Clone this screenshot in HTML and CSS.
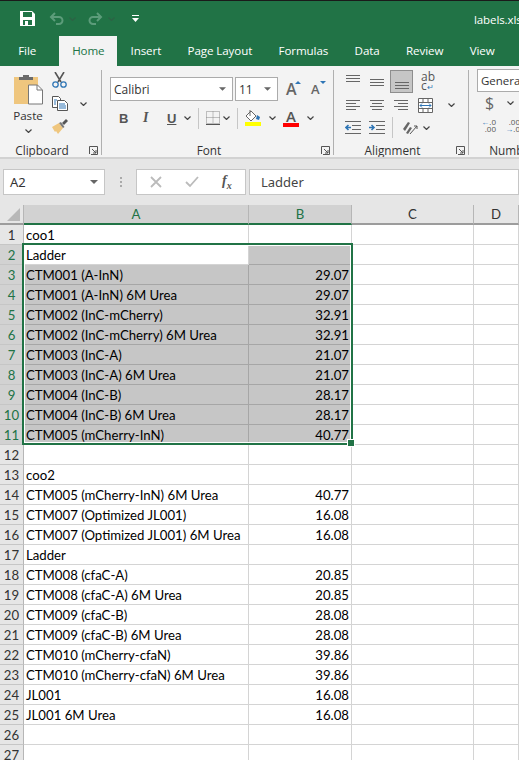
FILE: index.html
```html
<!DOCTYPE html>
<html lang="en">
<head>
    <meta charset="UTF-8">
    <meta name="viewport" content="width=device-width, initial-scale=1.0">
    <title>labels.xlsx - Excel</title>
    <link rel="stylesheet" href="styles.css">
</head>
<body>
    <svg class="defs" width="0" height="0">
        <symbol id="chev" viewBox="0 0 7 4"><path d="M.5.5 3.5 3.5 6.5.5" fill="none" stroke="#444" stroke-width="1.2"/></symbol>
        <symbol id="launch" viewBox="0 0 9 9"><path d="M.5 8V.5H8.500V8.500H2M3 3l4 4M7 4v3H4" fill="none" stroke="#555"/></symbol>
        <symbol id="caret" viewBox="0 0 8 4"><path d="M0 0h8L4 4z" fill="#666"/></symbol>
    </svg>

    <header class="titlebar">
        <svg width="15" height="15" viewBox="0 0 15 15"><path d="M0 0h12l3 3v12H0z" fill="#fff"/><path d="M3 1h9v5H3zM3 9h9v5H3z" fill="#217346"/><path d="M5 10h3v4H5z" fill="#fff"/></svg>
        <svg class="qa-undo" width="15" height="13" viewBox="0 0 15 13"><path d="M6 1 2 5l4 4M2 5h8a3.500 3.500 0 0 1 0 7H7" fill="none" stroke="#5c9c7a" stroke-width="2"/></svg>
        <svg class="qa-chev" width="7" height="4"><use href="#chev"/></svg>
        <svg class="qa-redo" width="15" height="13" viewBox="0 0 15 13"><path d="M9 1l4 4-4 4M13 5H5a3.500 3.500 0 0 0 0 7h3" fill="none" stroke="#5c9c7a" stroke-width="2"/></svg>
        <svg class="qa-chev" width="7" height="4"><use href="#chev"/></svg>
        <svg class="qa-more" width="7" height="7" viewBox="0 0 7 7"><path d="M0 0h7v1H0zM0 3h7L3.500 7z" fill="#fff"/></svg>
        <span class="doc-name">labels.xlsx - Excel</span>
    </header>

    <nav class="tabs">
        <span class="tab tab-file">File</span>
        <span class="tab tab-active">Home</span>
        <span class="tab">Insert</span>
        <span class="tab">Page Layout</span>
        <span class="tab">Formulas</span>
        <span class="tab">Data</span>
        <span class="tab">Review</span>
        <span class="tab">View</span>
    </nav>

    <section class="ribbon">
        <div class="group group-clipboard">
            <div class="group-body">
                <div class="paste">
                    <svg width="29" height="31" viewBox="0 0 29 31"><path d="M0 3h24v27H0z" fill="#efc67e"/><path d="M5 3h14v3H5zM9 1h6v3H9z" fill="#6a6a6a"/><path d="M14.500 11h9l5 5v14h-14z" fill="#fff" stroke="#777"/><path d="M23 11v5h5" fill="none" stroke="#777"/></svg>
                    <span class="paste-label">Paste</span>
                    <svg width="7" height="4"><use href="#chev"/></svg>
                </div>
                <div class="clip-tools">
                    <svg width="15" height="16" viewBox="0 0 15 16"><path d="M3 0l6 10M12 0 6 10" stroke="#555" stroke-width="1.600" fill="none"/><circle cx="3.500" cy="12.500" r="2.700" fill="none" stroke="#2e75b5" stroke-width="1.300"/><circle cx="11.500" cy="12.500" r="2.700" fill="none" stroke="#2e75b5" stroke-width="1.300"/></svg>
                    <div class="copy-row">
                        <svg width="16" height="15" viewBox="0 0 16 15"><path d="M.5.5h6l2 2v9h-8z" fill="#fff" stroke="#555"/><path d="M5.500 4.500h7l3 3v7h-10z" fill="#fff" stroke="#555"/><path d="M2 4h3M2 6h2M2 8h2M7 8h6M7 10h7M7 12h7" stroke="#2e75b5"/></svg>
                        <svg class="copy-chev" width="7" height="4"><use href="#chev"/></svg>
                    </div>
                    <svg width="16" height="15" viewBox="0 0 16 15"><path d="M0 8l7-4 4 5-5 6-2-3-1 1z" fill="#efc67e"/><path d="M7 4l4 5 1.500-1L9 3z" fill="#777"/><path d="M10 4l4-4 2 2-4 4z" fill="#555"/></svg>
                </div>
            </div>
            <div class="group-foot"><span class="group-name">Clipboard</span><svg class="launcher" width="9" height="9"><use href="#launch"/></svg></div>
        </div>

        <div class="group group-font">
            <div class="group-body font-body">
                <div class="font-row">
                    <div class="combo combo-font"><span>Calibri</span><svg width="7" height="4"><use href="#caret"/></svg></div>
                    <div class="combo combo-size"><span>11</span><svg width="7" height="4"><use href="#caret"/></svg></div>
                    <span class="grow">A<i class="tick tick-up"></i></span>
                    <span class="shrink">A<i class="tick tick-down"></i></span>
                </div>
                <div class="font-row format-row">
                    <b class="fmt fmt-b">B</b>
                    <i class="fmt fmt-i">I</i>
                    <u class="fmt fmt-u">U</u>
                    <svg class="fmt-chev" width="7" height="4"><use href="#chev"/></svg>
                    <span class="vsep"></span>
                    <svg width="14" height="14" viewBox="0 0 14 14"><path d="M.5.5h13v12H.5zM7 .5v12M.5 6.500h13" fill="none" stroke="#888" stroke-dasharray="1 1"/><path d="M0 13h14v1H0z" fill="#555"/></svg>
                    <svg class="fmt-chev" width="7" height="4"><use href="#chev"/></svg>
                    <span class="vsep"></span>
                    <span class="fill-icon">
                        <svg width="16" height="12" viewBox="0 0 16 12"><path d="M6 1 1 6l5 5 5-5z" fill="#fff" stroke="#666"/><path d="M5 0v6" stroke="#666"/><path d="M12 5l3 2-1 3-3-1z" fill="#2e75b5"/></svg>
                        <span class="bar bar-yellow"></span>
                    </span>
                    <svg class="fmt-chev" width="7" height="4"><use href="#chev"/></svg>
                    <span class="color-icon">A<span class="bar bar-red"></span></span>
                    <svg class="fmt-chev" width="7" height="4"><use href="#chev"/></svg>
                </div>
            </div>
            <div class="group-foot"><span class="group-name">Font</span><svg class="launcher" width="9" height="9"><use href="#launch"/></svg></div>
        </div>

        <div class="group group-align">
            <div class="group-body align-body">
                <div class="align-row row-one">
                    <span class="lines lines-top"><i></i><i></i><i></i></span>
                    <span class="lines lines-mid"><i></i><i></i><i></i></span>
                    <span class="lines-on"><span class="lines"><i></i><i></i><i></i></span></span>
                    <span class="wrap-icon">ab<br>c<em>↵</em></span>
                </div>
                <div class="align-row">
                    <span class="lines lines-left"><i></i><i></i><i></i><i></i></span>
                    <span class="lines lines-center"><i></i><i></i><i></i><i></i></span>
                    <span class="lines lines-right"><i></i><i></i><i></i><i></i></span>
                    <svg width="15" height="15" viewBox="0 0 15 15"><path d="M.5.5h14v14H.5zM.5 4.500h14M.5 10.500h14M5 .5v4M10 .5v4M5 10.500v4M10 10.500v4" fill="#fff" stroke="#666"/><path d="M2 7.500h11M4 5.500l-2 2 2 2M11 5.500l2 2-2 2" fill="none" stroke="#2e75b5"/></svg>
                    <svg class="merge-chev" width="7" height="4"><use href="#chev"/></svg>
                </div>
                <div class="align-row row-three">
                    <svg width="16" height="14" viewBox="0 0 16 14"><path d="M0 .5h16M7 4.500h9M7 8.500h9M0 12.500h16" stroke="#666"/><path d="M6 6.500H1M3.500 4 1 6.500 3.500 9" fill="none" stroke="#2e75b5" stroke-width="1.600"/></svg>
                    <svg width="16" height="14" viewBox="0 0 16 14"><path d="M0 .5h16M7 4.500h9M7 8.500h9M0 12.500h16" stroke="#666"/><path d="M0 6.500h5M2.500 4 5 6.500 2.500 9" fill="none" stroke="#2e75b5" stroke-width="1.600"/></svg>
                    <span class="vsep"></span>
                    <svg width="17" height="16" viewBox="0 0 17 16"><path d="M2 9l5-7 2 1-5 8zM5 13l4-6 2 1-4 6z" fill="#666"/><path d="M9 14l7-8M13 6h3v3" fill="none" stroke="#555"/></svg>
                    <svg class="orient-chev" width="7" height="4"><use href="#chev"/></svg>
                </div>
            </div>
            <div class="group-foot"><span class="group-name">Alignment</span><svg class="launcher" width="9" height="9"><use href="#launch"/></svg></div>
        </div>

        <div class="group group-number">
            <div class="group-body number-body">
                <div class="combo combo-general"><span>General</span></div>
                <div class="currency-row"><span class="dollar">$</span><svg width="7" height="4"><use href="#chev"/></svg></div>
                <div class="decimal-row">
                    <span class="decimal"><span><em>←</em>.0</span><span>.00</span></span>
                    <span class="decimal"><span>.00</span><span><em>→</em>.0</span></span>
                </div>
            </div>
            <div class="group-foot"><span class="group-name">Number</span></div>
        </div>
    </section>

    <section class="formula-bar">
        <div class="name-box"><span>A2</span><svg width="8" height="4"><use href="#caret"/></svg></div>
        <span class="grip"><i></i><i></i><i></i></span>
        <div class="fx-box">
            <svg width="12" height="12" viewBox="0 0 12 12"><path d="M1 1l10 10M11 1 1 11" stroke="#bbb" stroke-width="1.800"/></svg>
            <svg width="14" height="12" viewBox="0 0 14 12"><path d="M1 6l4 4 8-9" fill="none" stroke="#bbb" stroke-width="1.800"/></svg>
            <span class="fx-label">f<sub>x</sub></span>
        </div>
        <div class="formula-input">Ladder</div>
    </section>

    <div class="sheet">
        <table class="grid">
            <colgroup><col class="col-head"><col class="col-a"><col class="col-b"><col class="col-c"><col class="col-d"></colgroup>
            <thead>
                <tr>
                    <th class="corner"><span class="corner-mark"></span></th>
                    <th class="col-on">A</th><th class="col-on">B</th><th>C</th><th>D</th>
                </tr>
            </thead>
            <tbody>
                <tr><th>1</th><td>coo1</td><td></td><td></td><td></td></tr>
                <tr class="sel"><th>2</th><td class="active">Ladder</td><td></td><td></td><td></td></tr>
                <tr class="sel"><th>3</th><td>CTM001 (A-InN)</td><td class="num">29.07</td><td></td><td></td></tr>
                <tr class="sel"><th>4</th><td>CTM001 (A-InN) 6M Urea</td><td class="num">29.07</td><td></td><td></td></tr>
                <tr class="sel"><th>5</th><td>CTM002 (InC-mCherry)</td><td class="num">32.91</td><td></td><td></td></tr>
                <tr class="sel"><th>6</th><td>CTM002 (InC-mCherry) 6M Urea</td><td class="num">32.91</td><td></td><td></td></tr>
                <tr class="sel"><th>7</th><td>CTM003 (InC-A)</td><td class="num">21.07</td><td></td><td></td></tr>
                <tr class="sel"><th>8</th><td>CTM003 (InC-A) 6M Urea</td><td class="num">21.07</td><td></td><td></td></tr>
                <tr class="sel"><th>9</th><td>CTM004 (InC-B)</td><td class="num">28.17</td><td></td><td></td></tr>
                <tr class="sel"><th>10</th><td>CTM004 (InC-B) 6M Urea</td><td class="num">28.17</td><td></td><td></td></tr>
                <tr class="sel"><th>11</th><td>CTM005 (mCherry-InN)</td><td class="num">40.77</td><td></td><td></td></tr>
                <tr><th>12</th><td></td><td></td><td></td><td></td></tr>
                <tr><th>13</th><td>coo2</td><td></td><td></td><td></td></tr>
                <tr><th>14</th><td>CTM005 (mCherry-InN) 6M Urea</td><td class="num">40.77</td><td></td><td></td></tr>
                <tr><th>15</th><td>CTM007 (Optimized JL001)</td><td class="num">16.08</td><td></td><td></td></tr>
                <tr><th>16</th><td>CTM007 (Optimized JL001) 6M Urea</td><td class="num">16.08</td><td></td><td></td></tr>
                <tr><th>17</th><td>Ladder</td><td></td><td></td><td></td></tr>
                <tr><th>18</th><td>CTM008 (cfaC-A)</td><td class="num">20.85</td><td></td><td></td></tr>
                <tr><th>19</th><td>CTM008 (cfaC-A) 6M Urea</td><td class="num">20.85</td><td></td><td></td></tr>
                <tr><th>20</th><td>CTM009 (cfaC-B)</td><td class="num">28.08</td><td></td><td></td></tr>
                <tr><th>21</th><td>CTM009 (cfaC-B) 6M Urea</td><td class="num">28.08</td><td></td><td></td></tr>
                <tr><th>22</th><td>CTM010 (mCherry-cfaN)</td><td class="num">39.86</td><td></td><td></td></tr>
                <tr><th>23</th><td>CTM010 (mCherry-cfaN) 6M Urea</td><td class="num">39.86</td><td></td><td></td></tr>
                <tr><th>24</th><td>JL001</td><td class="num">16.08</td><td></td><td></td></tr>
                <tr><th>25</th><td>JL001 6M Urea</td><td class="num">16.08</td><td></td><td></td></tr>
                <tr><th>26</th><td></td><td></td><td></td><td></td></tr>
                <tr><th>27</th><td></td><td></td><td></td><td></td></tr>
            </tbody>
        </table>
        <div class="selection"><span class="handle"></span></div>
    </div>
</body>
</html>
```

FILE: styles.css
```css
* {
    box-sizing: border-box;
}

html, body {
    height: 760px;
}

body {
    margin: 0;
    overflow: hidden;
    background-color: #e6e6e6;
    font-family: "Open Sans", "Noto Sans", sans-serif;
    font-size: 12px;
    color: #333;
}

.defs {
    position: absolute;
}

i, em {
    font-style: normal;
}

svg {
    flex: none;
}

/* title bar */
.titlebar {
    display: flex;
    align-items: center;
    height: 36px;
    padding-left: 20px;
    background-color: #217346;
    border-top: 1px solid #1a1a1a;
    white-space: nowrap;
    overflow: hidden;
}
.qa-undo {
    margin-left: 14px;
    margin-right: 5px;
}
.qa-redo {
    margin-left: 12px;
    margin-right: 5px;
}
.qa-chev {
    opacity: .35;
}
.qa-more {
    margin-left: 17px;
}
.doc-name {
    flex: none;
    margin-left: 335px;
    padding-top: 2px;
    color: #fff;
    font-size: 11.5px;
    letter-spacing: -.1px;
}

/* tabs */
.tabs {
    display: flex;
    height: 30px;
    padding-left: 5px;
    background-color: #217346;
}
.tab {
    padding: 7px 13.2px 0;
    color: #fff;
    font-size: 11.6px;
    white-space: nowrap;
    letter-spacing: -.1px;
}
.tab-file {
    margin-right: 10px;
}
.tab-active {
    width: 58px;
    padding: 7px 0 0;
    text-align: center;
    background-color: #f3f3f3;
    color: #217346;
}

/* ribbon */
.ribbon {
    display: flex;
    height: 93px;
    background-color: #f3f3f3;
    border-bottom: 2px solid #d2d2d2;
    overflow: hidden;
}
.group {
    flex: none;
    height: 85px;
    margin-top: 4px;
    border-right: 1px solid #b0b0b0;
}
.group-clipboard {
    width: 102px;
}
.group-font {
    width: 232px;
}
.group-align {
    width: 135px;
}
.group-number {
    width: 86px;
    border-right: 0;
}
.group-body {
    display: flex;
    height: 70px;
}
.group-foot {
    position: relative;
    height: 20px;
    padding-right: 17px;
    text-align: center;
    font-size: 11.8px;
    line-height: 20px;
}
.group-number .group-foot {
    padding-right: 0;
}
.launcher {
    position: absolute;
    right: 3px;
    top: 6px;
}

/* clipboard */
.paste {
    display: flex;
    flex-direction: column;
    align-items: center;
    width: 46px;
    padding: 4px 0 0 10px;
}
.paste-label {
    margin-top: 2px;
    font-size: 11.6px;
    line-height: 18px;
}
.paste svg:last-child {
    margin-top: 4px;
}
.clip-tools {
    display: flex;
    flex-direction: column;
    gap: 8px;
    padding: 2px 0 0 6px;
}
.copy-row {
    display: flex;
    align-items: center;
}
.copy-chev {
    margin-left: 12px;
}

/* font */
.font-body {
    flex-direction: column;
    gap: 7px;
    padding: 7px 0 0 8px;
}
.font-row {
    display: flex;
    align-items: center;
}
.combo {
    display: flex;
    align-items: center;
    justify-content: space-between;
    height: 24px;
    padding: 0 6px 0 3px;
    background-color: #fff;
    border: 1px solid #ababab;
    font-size: 12px;
}
.combo-font {
    width: 123px;
    margin-right: 2px;
}
.combo-size {
    width: 43px;
}
.grow, .shrink {
    position: relative;
    font-size: 16px;
    line-height: 22px;
    color: #666;
    font-weight: 600;
}
.grow {
    margin-left: 8px;
    width: 25px;
}
.shrink {
    font-size: 13px;
}
.tick {
    position: absolute;
    top: 3px;
    left: 9px;
    width: 0;
    height: 0;
    border-left: 3px solid transparent;
    border-right: 3px solid transparent;
}
.tick-up {
    border-bottom: 3px solid #2e75b5;
}
.tick-down {
    border-top: 3px solid #2e75b5;
}
.format-row {
    height: 20px;
    padding-left: 9px;
}
.fmt {
    width: 24px;
    font-family: "Liberation Sans", sans-serif;
    font-size: 13px;
    color: #555;
}
.fmt-i {
    font-family: "Liberation Serif", serif;
    font-style: italic;
    font-weight: 700;
    font-size: 14px;
}
.fmt-u {
    width: 14px;
    font-weight: 700;
}
.fmt-chev {
    margin-left: 3px;
}
.vsep {
    flex: none;
    width: 1px;
    height: 21px;
    margin: 0 7px;
    background-color: #c6c6c6;
}
.fill-icon, .color-icon {
    display: flex;
    flex-direction: column;
    align-items: center;
    width: 16px;
    margin-right: 5px;
}
.color-icon {
    margin-left: 7px;
    font-size: 15px;
    line-height: 13px;
    font-weight: 600;
    color: #555;
}
.bar {
    display: block;
    flex: none;
    width: 16px;
    height: 4px;
}
.bar-yellow {
    background-color: #ffff00;
}
.bar-red {
    background-color: #ff0000;
}

/* alignment */
.align-body {
    flex-direction: column;
    padding-left: 12px;
}
.align-row {
    display: flex;
    align-items: center;
    gap: 10px;
    height: 22.5px;
}
.row-one {
    height: 24px;
    margin-top: -1px;
    margin-bottom: 1px;
}
.lines {
    display: flex;
    flex-direction: column;
    gap: 2px;
    width: 14px;
}
.lines i {
    display: block;
    height: 1px;
    background-color: #666;
}
.lines-top {
    margin-bottom: 6px;
}
.lines-mid {
    margin-top: 2px;
}
.lines-on {
    display: flex;
    justify-content: center;
    align-items: flex-end;
    width: 23px;
    height: 23px;
    margin: 0 -2px 0 -4px;
    padding-bottom: 3px;
    background-color: #c6c6c6;
    border: 1px solid #8e8e8e;
}
.wrap-icon {
    font-size: 12px;
    line-height: 9px;
    color: #555;
}
.wrap-icon em {
    color: #2e75b5;
    font-size: 8px;
}
.lines-left i:nth-child(even) {
    width: 10px;
}
.lines-center {
    align-items: center;
}
.lines-center i, .lines-right i {
    width: 14px;
}
.lines-center i:nth-child(even), .lines-right i:nth-child(even) {
    width: 10px;
}
.lines-right {
    align-items: flex-end;
}
.merge-chev {
    margin-left: 5px;
}
.row-three {
    gap: 8px;
    margin-left: -1px;
}
.row-three .vsep {
    margin: 0 0 0 -1px;
}
.orient-chev {
    margin-left: -3px;
}

/* number */
.number-body {
    flex-direction: column;
    padding-left: 8px;
}
.combo-general {
    flex: none;
    width: 70px;
    height: 23px;
    margin-top: -1px;
    font-size: 11.5px;
}
.currency-row {
    display: flex;
    align-items: center;
    gap: 13px;
    height: 22px;
    padding-left: 8px;
}
.dollar {
    font-size: 16px;
    color: #666;
}
.decimal-row {
    display: flex;
    gap: 8px;
    margin-top: 4px;
    padding-left: 3px;
}
.decimal {
    display: flex;
    flex-direction: column;
    align-items: flex-end;
    width: 16px;
    font-size: 8px;
    line-height: 7px;
    color: #555;
}
.decimal em {
    color: #2e75b5;
}

/* formula bar */
.formula-bar {
    display: flex;
    align-items: stretch;
    height: 26px;
    margin-top: 10px;
    padding-left: 3px;
}
.name-box {
    display: flex;
    align-items: center;
    justify-content: space-between;
    width: 102px;
    padding: 0 6px;
    background-color: #fff;
    border: 1px solid #c6c6c6;
    font-family: "Noto Sans", sans-serif;
    font-size: 13px;
}
.grip {
    display: flex;
    flex-direction: column;
    align-items: center;
    justify-content: center;
    gap: 2px;
    width: 31px;
}
.grip i {
    width: 2px;
    height: 2px;
    background-color: #aaa;
}
.fx-box {
    display: flex;
    align-items: center;
    width: 110px;
    padding-left: 13px;
    gap: 23px;
    background-color: #fff;
    border: 1px solid #c6c6c6;
}
.fx-label {
    font-family: "Liberation Serif", serif;
    font-style: italic;
    font-weight: 700;
    font-size: 14px;
    color: #555;
}
.fx-label sub {
    font-size: 10px;
}
.formula-input {
    flex: 1;
    margin-left: 3px;
    padding: 3px 11px;
    background-color: #fff;
    border: 1px solid #c6c6c6;
    font-family: "Noto Sans", sans-serif;
    font-size: 13px;
    color: #444;
    line-height: 18px;
}

/* sheet */
.sheet {
    position: relative;
    margin-top: 10px;
    background-color: #fff;
}
.grid {
    width: 519px;
    table-layout: fixed;
    border-collapse: separate;
    border-spacing: 0;
    font-family: Lato, "Noto Sans", sans-serif;
    font-size: 13.2px;
    color: #000;
}
.col-head {
    width: 24px;
}
.col-a {
    width: 225px;
}
.col-b {
    width: 103px;
}
.col-c {
    width: 122px;
}
.col-d {
    width: 45px;
}
.grid th {
    height: 20px;
    padding: 0;
    font-weight: 400;
    text-align: center;
    background-color: #e6e6e6;
    color: #333;
    border-right: 1px solid #b6b6b6;
    border-bottom: 1px solid #c6c6c6;
}
.grid thead th {
    border-bottom: 2px solid #9c9c9c;
}
.grid thead .col-on {
    background-color: #d2d2d2;
    color: #217346;
    border-bottom-color: #217346;
}
.corner {
    position: relative;
}
.corner-mark {
    position: absolute;
    right: 3px;
    bottom: 2px;
    width: 13px;
    height: 13px;
    background-color: #b8b8b8;
    clip-path: polygon(100% 0, 100% 100%, 0 100%);
}
.grid td {
    height: 20px;
    padding: 0 2px;
    white-space: nowrap;
    overflow: hidden;
    border-right: 1px solid #d4d4d4;
    border-bottom: 1px solid #d4d4d4;
}
.grid .num {
    text-align: right;
}
.grid tbody tr.sel th {
    background-color: #d2d2d2;
    color: #217346;
}
.sel td:nth-child(2), .sel td:nth-child(3) {
    background-color: #c6c6c6;
    border-color: #a6a6a6;
}
.sel td.active {
    background-color: #fff;
    border-color: #d4d4d4;
}
.selection {
    position: absolute;
    left: 22px;
    top: 38px;
    width: 331px;
    height: 202px;
    border: 2px solid #217346;
    box-shadow: inset 0 0 0 1px #fff;
    pointer-events: none;
}
.handle {
    position: absolute;
    right: -3px;
    bottom: -3px;
    width: 6px;
    height: 6px;
    background-color: #217346;
    outline: 1px solid #fff;
}
```
